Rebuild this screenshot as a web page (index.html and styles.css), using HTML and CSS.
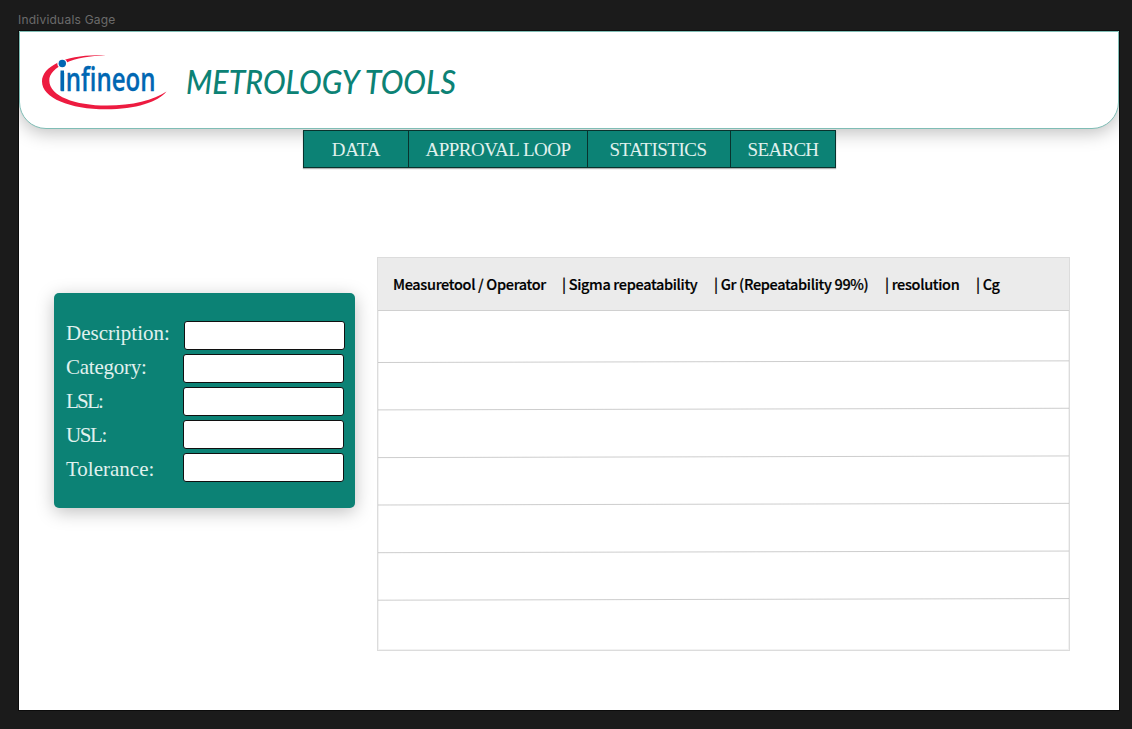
FILE: index.html
```html
<!DOCTYPE html>
<html lang="en">
<head>
<meta charset="utf-8">
<title>Individuals Gage</title>
<link rel="stylesheet" href="styles.css">
</head>
<body>
<div class="frame-name">Individuals Gage</div>
<div class="frame">
  <header class="header">
    <svg class="logo" width="126" height="56" viewBox="0 0 126 56" role="img" aria-label="Infineon">
      <path d="M64 0.500C28 -2 0 10 0 26.500C0 43 28 54.300 64 54.300C94 54.300 116 47 124.500 36.500C112 45 90 50.600 65 50.600C33 50.600 7.300 41 7.300 25.500C7.300 12 32 0.500 64 0.500Z" fill="#ed1b40"/>
      <circle cx="20.300" cy="8.500" r="5" fill="#fff"/>
      <circle cx="20.300" cy="8.500" r="3.700" fill="#0067b3"/>
      <path d="M18.500 15.500H22V35.700H18.500Z" fill="#0067b3"/>
      <text class="logo-text" x="17" y="35.700" textLength="96.500" lengthAdjust="spacingAndGlyphs">ınfineon</text>
    </svg>
    <h1 class="title"><svg class="title-art" width="276" height="40" viewBox="0 0 276 40"><text class="title-text" x="1" y="28" textLength="270" lengthAdjust="spacingAndGlyphs">METROLOGY TOOLS</text></svg></h1>
  </header>
  <nav class="nav">
    <a class="tab tab-data">DATA</a>
    <a class="tab tab-loop">APPROVAL LOOP</a>
    <a class="tab tab-stats">STATISTICS</a>
    <a class="tab tab-search">SEARCH</a>
  </nav>
  <main class="main">
    <form class="panel">
      <div class="labels">
        <label class="l-desc" for="f1">Description:</label>
        <label class="l-cat" for="f2">Category:</label>
        <label class="l-lsl" for="f3">LSL:</label>
        <label class="l-usl" for="f4">USL:</label>
        <label class="l-tol" for="f5">Tolerance:</label>
      </div>
      <div class="fields">
        <input class="field field-first" id="f1">
        <input class="field" id="f2">
        <input class="field" id="f3">
        <input class="field" id="f4">
        <input class="field" id="f5">
      </div>
    </form>
    <section class="table">
      <div class="table-head">
        <span class="col col-tool">Measuretool / Operator</span>
        <span class="col col-sigma">| Sigma repeatability</span>
        <span class="col col-gr">| Gr (Repeatability 99%)</span>
        <span class="col col-res">| resolution</span>
        <span class="col col-cg">| Cg</span>
      </div>
      <svg class="rules" width="691" height="339" viewBox="0 0 691 339">
        <path d="M0 51.500L691 49.850M0 98.900L691 97.250M0 146.600L691 144.950M0 194L691 192.350M0 241.700L691 240.050M0 289.200L691 287.550"/>
      </svg>
    </section>
  </main>
</div>
</body>
</html>
```
FILE: styles.css
```css
* { box-sizing: border-box; }
body {
  margin: 0;
  height: 729px;
  overflow: hidden;
  background: #1b1b1b;
  padding: 0 13px 0 19px;
}
.frame-name {
  height: 31px;
  padding-top: 12px;
  margin-left: -1px;
  font: 12px/15px Inter, sans-serif;
  letter-spacing: 0.22px;
  color: #6b6b6b;
}
.frame {
  width: 1100px;
  height: 679px;
  background: #fff;
  box-shadow: 0 0 0 1px #0c0c0c;
  overflow: hidden;
}
.header {
  display: flex;
  height: 98px;
  padding: 23px 0 0 22px;
  border: 1px solid #7fbdb5;
  border-radius: 0 0 27px 27px;
  background: #fff;
  box-shadow: 0 4px 18px rgba(0, 0, 0, 0.25);
}
.logo { margin-right: 17px; overflow: visible; }
.logo-text {
  font: 600 32px "Open Sans", sans-serif;
  fill: #0067b3;
  stroke: #0067b3;
  stroke-width: 0.3;
}
.title { margin: 11px 0 0; font-size: 33px; line-height: 1; }
.title-art { display: block; overflow: visible; }
.title-text {
  font: italic 500 32px Lato, sans-serif;
  fill: #0c8275;
}
.nav {
  display: flex;
  position: relative;
  width: 533px;
  height: 38px;
  margin: 1px 0 0 284px;
  border: 1px solid #08322d;
  background: #0c8275;
  box-shadow: 0 1px 1px rgba(0, 0, 0, 0.3);
}
.tab {
  display: flex;
  flex: none;
  justify-content: center;
  font: 19px/38px "Liberation Serif", serif;
  height: 36px;
  color: #e0f1ee;
  white-space: nowrap;
}
.tab + .tab { border-left: 1px solid #08322d; }
.tab-data { width: 104px; letter-spacing: -0.2px; }
.tab-loop { width: 179px; letter-spacing: -0.5px; }
.tab-stats { width: 143px; letter-spacing: -0.5px; padding-right: 2px; }
.tab-search { width: 105px; letter-spacing: -0.7px; }
.main {
  display: flex;
  align-items: flex-start;
  padding: 89px 0 0 35px;
}
.panel {
  display: flex;
  width: 301px;
  height: 215px;
  margin: 36px 22px 0 0;
  padding: 28px 0 0 12px;
  border-radius: 5px;
  background: #0c8275;
  box-shadow: 0 4px 18px rgba(0, 0, 0, 0.25);
}
.labels {
  display: flex;
  flex-direction: column;
  width: 117px;
  margin-top: -4px;
  font: 21px/33.9px "Liberation Serif", serif;
  color: #e0f1ee;
}
.l-cat { letter-spacing: -0.25px; }
.l-lsl { letter-spacing: -1.8px; }
.l-usl { letter-spacing: -1.4px; }
.fields { display: flex; flex-direction: column; gap: 4px; }
.field {
  width: 161px;
  height: 29px;
  border: 1px solid #101010;
  border-radius: 3px;
  background: #fff;
}
.field-first { margin-left: 1px; }
.table {
  width: 693px;
  height: 394px;
  border: 1px solid #dcdcdc;
  box-shadow: inset 0 0 0 1px #f2f2f2;
}
.table-head {
  display: flex;
  height: 53px;
  padding-left: 15px;
  background: #ebebeb;
  border-bottom: 1px solid #d0d0d0;
  font: 500 14.5px/51px "Noto Sans CJK SC", sans-serif;
  letter-spacing: -0.33px;
  color: #000;
  -webkit-text-stroke: 0.2px #000;
}
.col { flex: none; white-space: nowrap; }
.col-tool { width: 169px; }
.col-sigma { width: 152px; }
.col-gr { width: 171px; }
.col-res { width: 91px; }
.rules {
  display: block;
  fill: none;
  stroke: #c0c0c0;
  stroke-width: 0.8;
}
```
